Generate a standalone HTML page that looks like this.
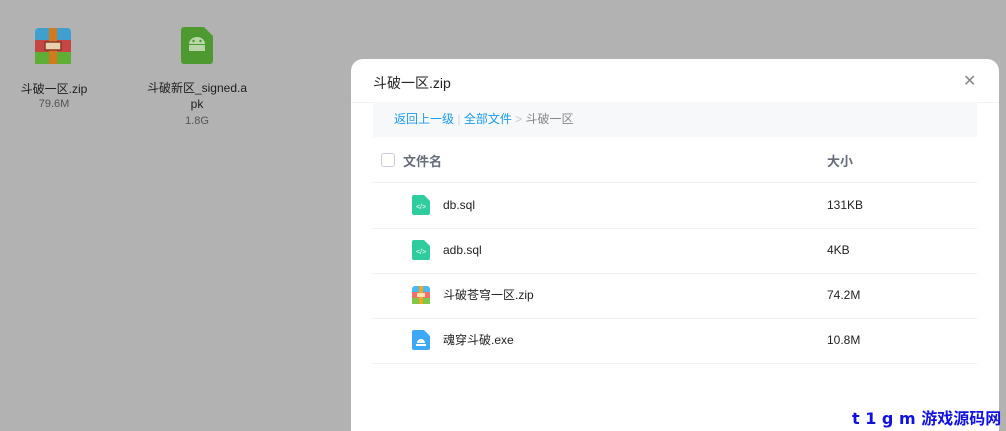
<!DOCTYPE html><html style="width:1006px;height:431px;overflow:hidden"><head><meta charset="utf-8"><style>
body{margin:0;width:1006px;height:431px;overflow:hidden;background:#b2b2b2;font-family:"Liberation Sans","Noto Sans CJK SC",sans-serif;position:relative}
.a{position:absolute}
.t{font-size:12px;color:#1e1e1e;text-align:center}
.s{font-size:11px;color:#555;text-align:center}
.modal{position:absolute;left:351px;top:59px;width:648px;height:372px;background:#fff;border-radius:12px 12px 0 0}
.row{position:absolute;left:22px;width:604px;height:45px;border-bottom:1px solid #eef0f3;font-size:12px;color:#222}
.row span{position:absolute;top:14px;line-height:16px}
</style></head><body>
<svg class="a" style="left:35px;top:28px" width="36" height="36" viewBox="0 0 36 36"><rect width="36" height="36" rx="4" fill="#3f9fcf"/><rect y="12" width="36" height="12" fill="#c64545"/><rect y="24" width="36" height="12" rx="0" fill="#5fae36"/><rect x="14" width="8" height="36" fill="#d27a1e"/><rect x="10" y="14" width="16" height="8" fill="#e8d0b0" stroke="#8a3a2a" stroke-width="1.5"/></svg>
<div class="a t" style="left:10px;top:80px;width:88px">斗破一区.zip</div>
<div class="a s" style="left:10px;top:98px;width:88px">79.6M</div>
<svg class="a" style="left:181px;top:27px" width="32" height="37" viewBox="0 0 32 37"><path d="M3 0H23L32 9V34a3 3 0 0 1-3 3H3a3 3 0 0 1-3-3V3a3 3 0 0 1 3-3z" fill="#4e9a31"/><path d="M8 17a8 7 0 0 1 16 0z M8 18h16v6H8z" fill="#b9d6a8"/><circle cx="12.5" cy="14" r="1.2" fill="#4e9a31"/><circle cx="19.5" cy="14" r="1.2" fill="#4e9a31"/></svg>
<div class="a t" style="left:145px;top:80px;width:104px;line-height:16px">斗破新区_signed.a<br>pk</div>
<div class="a s" style="left:145px;top:115px;width:104px">1.8G</div>
<div class="modal">
<div class="a" style="left:22px;top:14px;font-size:14px;color:#222">斗破一区.zip</div>
<div class="a" style="left:612px;top:12px;font-size:16px;color:#888">✕</div>
<div class="a" style="left:0;top:43px;width:648px;border-top:1px solid #f0f1f4"></div>
<div class="a" style="left:22px;top:43px;width:604px;height:35px;background:#f7f8fa;font-size:12px;line-height:35px"><span style="margin-left:21px;color:#1a9bf0">返回上一级</span><span style="color:#c8d6e8"> | </span><span style="color:#1a9bf0">全部文件</span><span style="color:#c0c8d0"> &gt; </span><span style="color:#888">斗破一区</span></div>
<div class="a" style="left:30px;top:94px;width:12px;height:12px;border:1px solid #ccd;border-radius:3px"></div>
<div class="a" style="left:52px;top:92px;font-size:13px;font-weight:bold;color:#666e7a">文件名</div>
<div class="a" style="left:476px;top:92px;font-size:13px;font-weight:bold;color:#666e7a">大小</div>
<div class="a" style="left:22px;top:123px;width:604px;border-top:1px solid #eef0f3"></div>
<div class="row" style="top:124px"><svg class="a" style="left:39px;top:12px" width="18" height="20"><path d="M2 0h10l6 6v12a2 2 0 0 1-2 2H2a2 2 0 0 1-2-2V2a2 2 0 0 1 2-2z" fill="#2fcca0"/><text x="9" y="14" font-size="7" fill="#fff" text-anchor="middle" font-family="Liberation Sans">&lt;/&gt;</text></svg><span style="left:70px">db.sql</span><span style="left:454px">131KB</span></div>
<div class="row" style="top:169px"><svg class="a" style="left:39px;top:12px" width="18" height="20"><path d="M2 0h10l6 6v12a2 2 0 0 1-2 2H2a2 2 0 0 1-2-2V2a2 2 0 0 1 2-2z" fill="#2fcca0"/><text x="9" y="14" font-size="7" fill="#fff" text-anchor="middle" font-family="Liberation Sans">&lt;/&gt;</text></svg><span style="left:70px">adb.sql</span><span style="left:454px">4KB</span></div>
<div class="row" style="top:214px"><svg class="a" style="left:39px;top:13px" width="18" height="18"><rect width="18" height="18" rx="3" fill="#4cb8f0"/><rect y="6" width="18" height="6" fill="#f07070"/><rect y="12" width="18" height="6" fill="#7cc94a"/><rect x="7" width="4" height="18" fill="#f5a623"/><rect x="5" y="7" width="8" height="4" fill="#fde6b0"/></svg><span style="left:70px">斗破苍穹一区.zip</span><span style="left:454px">74.2M</span></div>
<div class="row" style="top:259px"><svg class="a" style="left:39px;top:12px" width="18" height="20"><path d="M2 0h10l6 6v12a2 2 0 0 1-2 2H2a2 2 0 0 1-2-2V2a2 2 0 0 1 2-2z" fill="#3da8f5"/><path d="M5 13a4 4 0 0 1 8 0zM4 14h10v2H4z" fill="#fff"/></svg><span style="left:70px">魂穿斗破.exe</span><span style="left:454px">10.8M</span></div>
</div>
<div class="a" style="left:852px;top:405px;font-size:16px;font-weight:bold;color:#1010e0;white-space:nowrap;font-family:'DejaVu Sans','Noto Sans CJK SC',sans-serif">t 1 g m 游戏源码网</div>
</body></html>
